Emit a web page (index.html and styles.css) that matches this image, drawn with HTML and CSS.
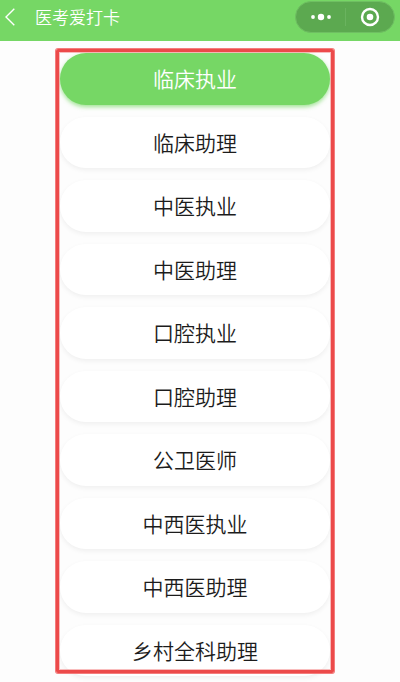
FILE: index.html
```html
<!DOCTYPE html>
<html lang="zh-CN">
<head>
    <meta charset="UTF-8">
    <meta name="viewport" content="width=device-width, initial-scale=1.0">
    <title>医考爱打卡</title>
    <link rel="stylesheet" href="styles.css">
</head>
<body>
    <header class="navbar">
        <button type="button" class="back-button" aria-label="返回">
            <svg width="10" height="18" viewBox="0 0 10 18" fill="none" stroke="#fff" stroke-width="1.4">
                <path d="M9.3 0.8 L1 9 L9.3 17.2"/>
            </svg>
        </button>
        <h1>医考爱打卡</h1>
        <div class="capsule">
            <button type="button" class="capsule-btn" aria-label="更多">
                <svg width="20" height="8" viewBox="0 0 20 8" fill="#fff">
                    <circle cx="2" cy="4" r="1.9"/>
                    <circle cx="10" cy="4" r="3.2"/>
                    <circle cx="18" cy="4" r="1.9"/>
                </svg>
            </button>
            <button type="button" class="capsule-btn" aria-label="关闭">
                <svg width="20" height="20" viewBox="0 0 20 20">
                    <circle cx="10" cy="10" r="8" fill="none" stroke="#fff" stroke-width="2.4"/>
                    <circle cx="10" cy="10" r="3.3" fill="#fff"/>
                </svg>
            </button>
        </div>
    </header>

    <main class="content">
        <div class="category-list">
            <button type="button" class="category active">临床执业</button>
            <button type="button" class="category">临床助理</button>
            <button type="button" class="category">中医执业</button>
            <button type="button" class="category">中医助理</button>
            <button type="button" class="category">口腔执业</button>
            <button type="button" class="category">口腔助理</button>
            <button type="button" class="category">公卫医师</button>
            <button type="button" class="category">中西医执业</button>
            <button type="button" class="category">中西医助理</button>
            <button type="button" class="category">乡村全科助理</button>
            <div class="highlight-frame"></div>
        </div>
    </main>
</body>
</html>
```
FILE: styles.css
```css
* {
    margin: 0;
    padding: 0;
    box-sizing: border-box;
    font-family: "Noto Sans CJK SC", sans-serif;
}

body {
    display: flex;
    flex-direction: column;
    min-height: 100vh;
    background: #fdfdfd;
}

button {
    border: none;
    background: none;
    cursor: pointer;
}

.navbar {
    display: flex;
    align-items: center;
    height: 41px;
    padding: 0 5px 7px;
    background: #76d765;
}

.back-button {
    display: flex;
    width: 30px;
}

.navbar h1 {
    color: #fff;
    font-size: 17px;
    font-weight: 350;
    line-height: 24px;
}

.capsule {
    display: flex;
    width: 100px;
    height: 32px;
    margin-left: auto;
    border: 1px solid #6fbf62;
    border-radius: 16px;
    background: #5ca950;
}

.capsule-btn {
    display: flex;
    flex: 1;
    align-items: center;
    justify-content: center;
}

.capsule-btn + .capsule-btn {
    position: relative;
}

.capsule-btn + .capsule-btn::before {
    content: "";
    position: absolute;
    top: 6px;
    left: 0;
    width: 1px;
    height: 18px;
    background: #6ab35f;
}

.content {
    display: flex;
    flex: 1;
    padding: 12px 70px 6px 60px;
}

.category-list {
    position: relative;
    display: grid;
    flex: 1;
    grid-auto-rows: 1fr;
    gap: 12px;
}

.category {
    min-height: 48px;
    padding-bottom: 1px;
    border-radius: 26px;
    background: #fff;
    box-shadow: 0 2px 5px rgba(0, 0, 0, 0.06);
    color: #1c1c1c;
    font-size: 21px;
    font-weight: 350;
    line-height: 30px;
}

.category.active {
    background: #76d765;
    box-shadow: 0 2px 4px rgba(118, 215, 101, 0.7);
    color: #fff;
}

/* red frame drawn over the list */
.highlight-frame {
    position: absolute;
    inset: -4px -4px 3px;
    border: 3px solid #ec4a4a;
    border-radius: 2px;
    box-shadow: 0 0 0 1px #f47c7c, inset 0 0 0 1px rgba(244, 124, 124, 0.5);
    pointer-events: none;
}
```
